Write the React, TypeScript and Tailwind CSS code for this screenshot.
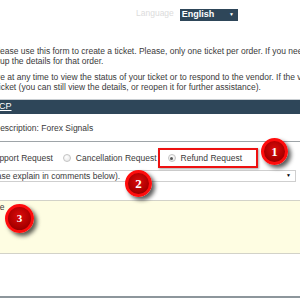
import type { ReactNode } from "react";

function Radio({ checked = false }: { checked?: boolean }) {
  return (
    <span className="flex h-[8px] w-[8px] shrink-0 items-center justify-center rounded-full border border-[#c4c4c4] bg-[radial-gradient(circle_at_40%_35%,#ffffff_0%,#e4e4e4_100%)]">
      {checked ? <span className="h-[3px] w-[3px] rounded-full bg-[#555]" /> : null}
    </span>
  );
}

function Badge({ n, className }: { n: string; className: string }) {
  return (
    <span
      className={`absolute flex items-center justify-center rounded-full border-[3px] border-[#ff0d0d] bg-[radial-gradient(circle_at_50%_40%,#dc0c0c_0%,#ad0000_60%,#7a0000_100%)] font-['Liberation_Serif',serif] font-bold text-white shadow-[3px_3px_4px_rgba(0,0,0,0.65)] ${className}`}
    >
      {n}
    </span>
  );
}

function Line({ children, className = "" }: { children: ReactNode; className?: string }) {
  return <div className={`h-[10px] whitespace-nowrap leading-[10px] ${className}`}>{children}</div>;
}

export default function App() {
  return (
    <div className="relative h-[300px] w-[300px] overflow-hidden bg-white font-['Liberation_Sans',Arial,sans-serif] text-[8.5px] text-[#3a3a3a]">
      {/* language picker */}
      <div className="flex h-[21px] items-end gap-[6px] pl-[136px]">
        <span className="pb-[1px] text-[#dcdcdc]">Language</span>
        <div className="flex h-[12px] w-[58px] items-center justify-between bg-[#2e4659] px-[2px] text-[9px] font-bold text-white">
          <span>English</span>
          <span className="pr-[2px] text-[5px]">▼</span>
        </div>
      </div>

      {/* intro text */}
      <div className="mt-[25px]">
        <Line className="-ml-[7.5px]">
          Please use this form to create a ticket. Please, only one ticket per order. If you need
        </Line>
        <Line className="-ml-[18px]">look up the details for that order.</Line>
      </div>
      <div className="mt-[6px]">
        <Line className="-ml-[40px]">
          Return here at any time to view the status of your ticket or to respond to the vendor. If the vendor
        </Line>
        <Line className="-ml-[40px]">
          close the ticket (you can still view the details, or reopen it for further assistance).
        </Line>
      </div>

      <div className="mt-[7px] h-[1px] bg-[#c9ced2]" />

      {/* section header */}
      <div className="flex h-[14px] items-center bg-[#2e4659] text-[9px] text-white">
        <span className="-ml-[1px] underline">CP</span>
      </div>

      {/* description */}
      <div className="flex h-[28px] items-center border-b border-[#9ea4a8] pt-[2px]">
        <span className="-ml-[6px]">Description: Forex Signals</span>
      </div>

      {/* request type */}
      <div className="flex h-[27px] items-center -ml-[23px] whitespace-nowrap pt-[5px]">
        <Radio />
        <span className="ml-[4px]">Support Request</span>
        <span className="ml-[10px]">
          <Radio />
        </span>
        <span className="ml-[5px]">Cancellation Request</span>
        <span className="ml-[1px] flex h-[20px] w-[100px] items-center border-2 border-[#ee1111] pl-[8px] shadow-[1px_1px_2px_rgba(0,0,0,0.35)]">
          <Radio checked />
          <span className="ml-[5px]">Refund Request</span>
        </span>
      </div>

      {/* reason select */}
      <div className="mt-[1px] flex h-[12px] w-[342px] -ml-[46px] items-center justify-between border border-[#cfcfcf] pl-[4px] pr-[4px]">
        <span>Other (please explain in comments below).</span>
        <span className="text-[5px] text-black">▼</span>
      </div>

      {/* comments */}
      <div className="mt-[18px] h-[54px] border-y border-[#d2d2c8] bg-[#fefde2] pt-[2px]">
        <span className="-ml-[30px] block leading-[9px]">Message</span>
      </div>

      <div className="mt-[42px] h-[2px] bg-[#8d969c]" />

      <Badge n="1" className="left-[261px] top-[138px] h-[27px] w-[27px] text-[13px]" />
      <Badge n="2" className="left-[125px] top-[170px] h-[27px] w-[27px] text-[13px]" />
      <Badge n="3" className="left-[5px] top-[204px] h-[29px] w-[29px] font-['Liberation_Sans',sans-serif] text-[11px]" />
    </div>
  );
}
